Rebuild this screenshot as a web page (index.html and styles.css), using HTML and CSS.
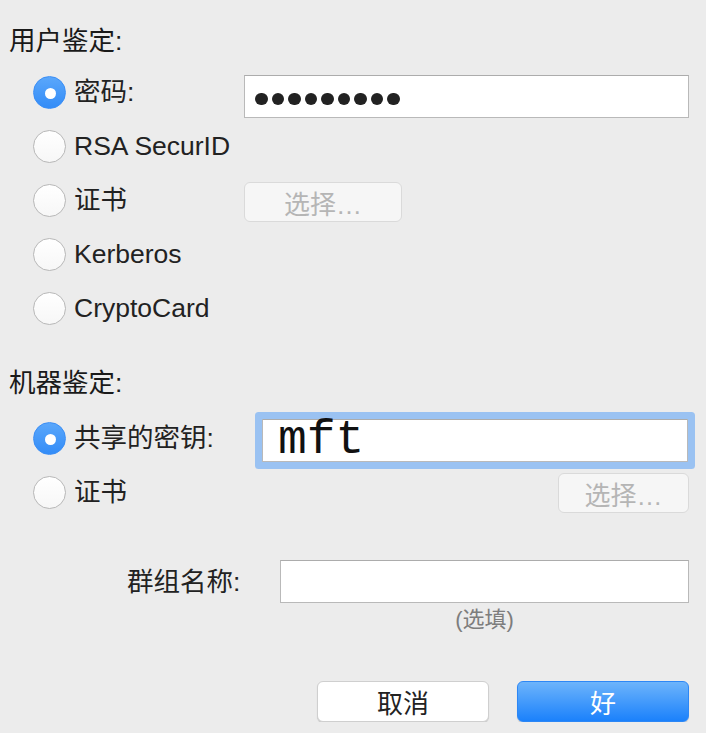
FILE: index.html
```html
<!DOCTYPE html>
<html lang="zh-CN">
<head>
    <meta charset="UTF-8">
    <meta name="viewport" content="width=device-width, initial-scale=1.0">
    <title>VPN 鉴定设置</title>
    <link rel="stylesheet" href="styles.css">
</head>
<body>

    <div class="dialog">
        <!-- 用户鉴定 -->
        <div class="title">用户鉴定:</div>

        <div class="row">
            <span class="radio checked"></span>
            <span class="label user-label">密码:</span>
            <div class="field password-field">
                <span class="dot"></span><span class="dot"></span><span class="dot"></span>
                <span class="dot"></span><span class="dot"></span><span class="dot"></span>
                <span class="dot"></span><span class="dot"></span><span class="dot"></span>
            </div>
        </div>
        <div class="row">
            <span class="radio"></span>
            <span class="label">RSA SecurID</span>
        </div>
        <div class="row">
            <span class="radio"></span>
            <span class="label user-label">证书</span>
            <button class="btn disabled choose-btn">选择…</button>
        </div>
        <div class="row">
            <span class="radio"></span>
            <span class="label">Kerberos</span>
        </div>
        <div class="row">
            <span class="radio"></span>
            <span class="label">CryptoCard</span>
        </div>

        <!-- 机器鉴定 -->
        <div class="title second">机器鉴定:</div>

        <div class="row">
            <span class="radio checked"></span>
            <span class="label machine-label">共享的密钥:</span>
            <div class="field key-field focused">mft</div>
        </div>
        <div class="row">
            <span class="radio"></span>
            <span class="label">证书</span>
            <button class="btn disabled choose-btn right">选择…</button>
        </div>

        <!-- 群组名称 -->
        <div class="group-row">
            <span class="group-label">群组名称:</span>
            <div class="field group-field"></div>
        </div>
        <div class="hint">(选填)</div>

        <div class="actions">
            <button class="btn action">取消</button>
            <button class="btn action primary">好</button>
        </div>
    </div>

</body>
</html>
```

FILE: styles.css
```css
body {
    margin: 0;
    background-color: #ececec;
    font-family: "Liberation Sans", "Noto Sans CJK SC", sans-serif;
    font-size: 26.5px;
    color: #222;
}

.dialog {
    width: 680px;
    padding: 26px 0 0 9px;
}

.title {
    height: 30px;
    line-height: 30px;
    margin-bottom: 9px;
    color: #1a1a1a;
}

.title.second {
    margin-top: 33px;
    margin-bottom: 13px;
}

.row {
    display: flex;
    align-items: center;
    height: 54px;
    padding-left: 24px;
}

.radio {
    width: 33px;
    height: 33px;
    box-sizing: border-box;
    border-radius: 50%;
    border: 1px solid #b8b8b8;
    background: linear-gradient(#ffffff, #f7f7f7);
    flex-shrink: 0;
    position: relative;
}

.radio.checked {
    border-color: #3a8ef6;
    background: linear-gradient(#5aa7fb, #338cf7);
}

.radio.checked::after {
    content: "";
    position: absolute;
    left: 11px;
    top: 11px;
    width: 11px;
    height: 11px;
    border-radius: 50%;
    background: #fff;
}

.label {
    margin-left: 8px;
    line-height: 30px;
    white-space: nowrap;
}

.user-label {
    width: 170px;
}

.machine-label {
    width: 188px;
}

.field {
    box-sizing: border-box;
    height: 43px;
    background: #fff;
    border: 1px solid #b9b9b9;
    border-top-color: #acacac;
}

.password-field {
    width: 445px;
    margin-top: 9px;
    display: flex;
    align-items: center;
    gap: 4px;
    padding: 5px 0 0 10px;
}

.dot {
    width: 12.5px;
    height: 12.5px;
    border-radius: 50%;
    background: #222;
}

.key-field {
    width: 426px;
    margin-top: 5px;
    padding-left: 15px;
    font-family: "Liberation Mono", monospace;
    font-size: 48px;
    line-height: 40px;
    color: #111;
}

.focused {
    border-radius: 1px;
    box-shadow: 0 0 0 7px #9ac2f2;
}

.btn {
    box-sizing: border-box;
    height: 40px;
    font-family: "Liberation Sans", "Noto Sans CJK SC", sans-serif;
    font-size: 26px;
    border-radius: 6px;
    border: 1px solid #d4d4d4;
    background: #fff;
    color: #222;
    padding: 0;
}

.btn.disabled {
    background: #f6f6f6;
    color: #b5b5b5;
    border-color: #dadada;
}

.choose-btn {
    width: 158px;
    margin-top: 4px;
}

.choose-btn.right {
    width: 131px;
    margin-left: auto;
    margin-top: 2px;
}

.group-row {
    display: flex;
    align-items: center;
    margin-top: 41px;
}

.group-label {
    margin-left: 118px;
    line-height: 30px;
}

.group-field {
    width: 409px;
    margin-left: auto;
}

.hint {
    margin: 5px 0 0 271px;
    width: 409px;
    text-align: center;
    font-size: 22px;
    line-height: 24px;
    color: #7d7d7d;
}

.actions {
    display: flex;
    justify-content: flex-end;
    gap: 28px;
    margin-top: 49px;
}

.btn.action {
    width: 172px;
    height: 41px;
    border-color: #cfcfcf;
    box-shadow: 0 1px 1px rgba(0, 0, 0, 0.15);
}

.btn.primary {
    background: linear-gradient(#6db4fb, #1b81fb);
    border-color: #2d87f5;
    color: #fff;
}
```
